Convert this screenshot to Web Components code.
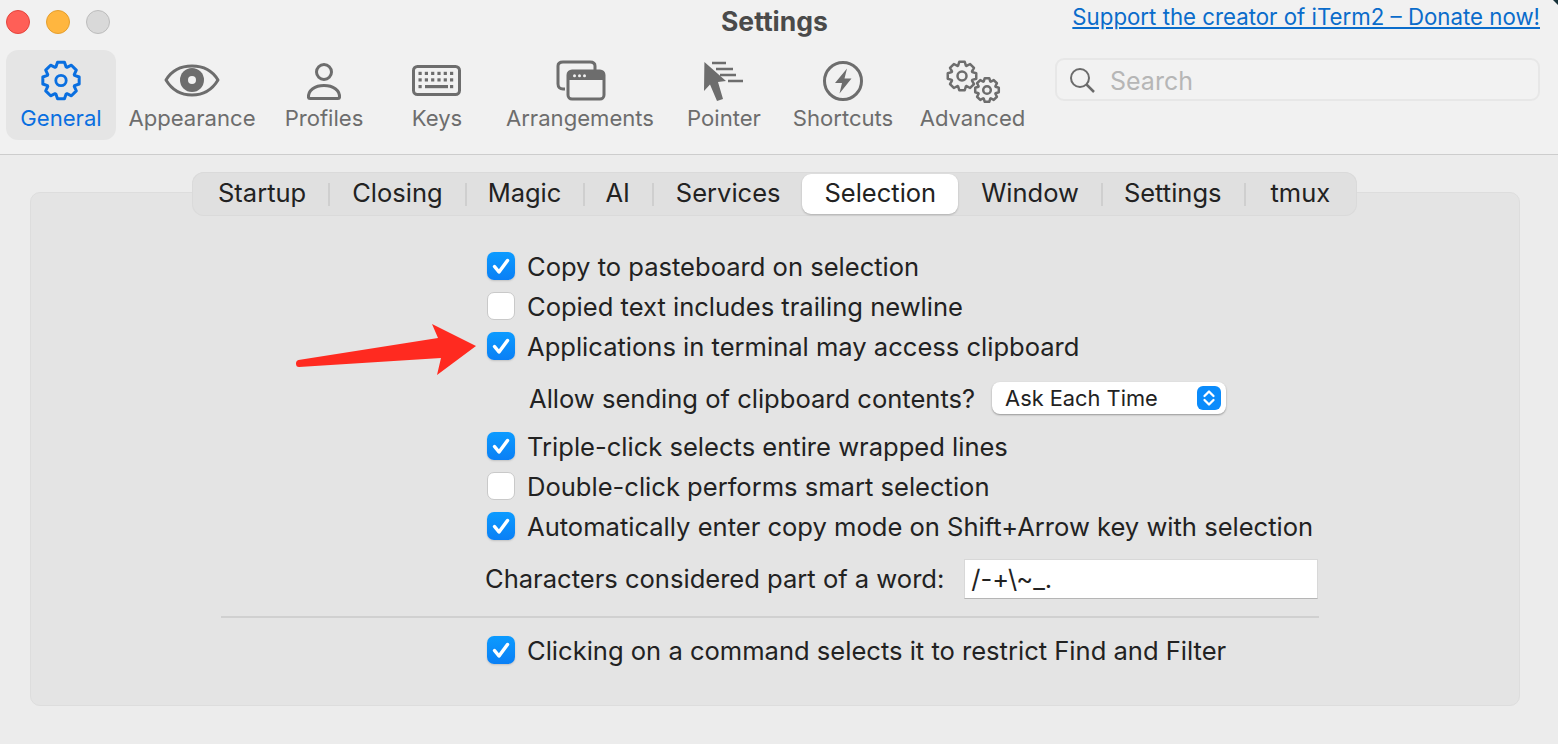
<!DOCTYPE html>
<html>
<head>
<meta charset="utf-8">
<title>Settings</title>
<style>
  html, body { margin: 0; height: 100%; overflow: hidden; }
  body { background: #ececec; font-family: Inter, "Liberation Sans", sans-serif; color: #222; }
</style>
</head>
<body>
<settings-window></settings-window>

<script>
// builds a gear outline as a polygon, the round stroke join softens the teeth
function gearPoints(cx, cy, rOut, rIn, teeth) {
  const pts = [];
  const step = Math.PI * 2 / teeth;
  for (let i = 0; i < teeth; i++) {
    const a = i * step - Math.PI / 2;
    [[-0.5, rIn], [-0.24, rOut], [0.24, rOut], [0.5, rIn]].forEach(([k, r]) => {
      const t = a + k * step * (r === rIn ? 0.92 : 1);
      pts.push((cx + Math.cos(t) * r).toFixed(2) + ',' + (cy + Math.sin(t) * r).toFixed(2));
    });
  }
  return pts.join(' ');
}

function keyboardDots() {
  let out = '';
  [19.8, 26.3].forEach(y => {
    for (let i = 0; i < 6; i++) out += `<rect x="${16.5 + i * 6.3}" y="${y}" width="3.2" height="3.2"/>`;
  });
  out += '<rect x="16.5" y="33" width="3.2" height="3.2"/><rect x="23" y="33" width="23" height="3.2"/><rect x="48" y="33" width="3.2" height="3.2"/>';
  return out;
}

const icons = {
  general: `<polygon points="${gearPoints(35, 28.5, 18.5, 14.5, 8)}" fill="none" stroke="currentColor" stroke-width="3" stroke-linejoin="round"/>
    <circle cx="35" cy="28.5" r="5.2" fill="none" stroke="currentColor" stroke-width="2.8"/>`,
  appearance: `<path d="M9 28C15 18 24 14 35 14S55 18 61 28C55 38 46 43 35 43S15 38 9 28Z" fill="none" stroke="currentColor" stroke-width="3" stroke-linejoin="round"/>
    <circle cx="35" cy="28" r="12"/><circle cx="35" cy="28" r="4" fill="#f1f1f1"/>`,
  profiles: `<circle cx="35" cy="20" r="7.5" fill="none" stroke="currentColor" stroke-width="3"/>
    <path d="M19.5 45.5C19 38 26 33.5 35 33.5S51 38 50.5 45.5C50.4 46.3 49.8 46.5 49 46.5H21C20.2 46.5 19.6 46.3 19.5 45.5Z" fill="none" stroke="currentColor" stroke-width="3" stroke-linejoin="round"/>`,
  keys: `<rect x="11.5" y="14.5" width="46" height="28" rx="4" fill="none" stroke="currentColor" stroke-width="3"/>${keyboardDots()}`,
  arrangements: `<path d="M20 37H18C15 37 13 35 13 32V14C13 11 15 10 18 10H45C48 10 50 11 50 14V18" fill="none" stroke="currentColor" stroke-width="3"/>
    <rect x="23" y="19" width="36" height="28" rx="4" fill="none" stroke="currentColor" stroke-width="3"/>
    <path d="M23 28V23C23 20.5 25 19 27 19H55C57 19 59 20.5 59 23V28Z"/>
    <g fill="#f1f1f1"><circle cx="29.5" cy="23.800" r="1.500"/><circle cx="34.5" cy="23.800" r="1.500"/><circle cx="39.5" cy="23.800" r="1.500"/></g>`,
  pointer: `<path d="M15.4 10L37 29L29 30L34 47L28 49L21 32.5L15 39Z"/>
    <g fill="none" stroke="currentColor" stroke-width="2.500"><path d="M23 11H37M27 17H44M31 23H47M39 29H54"/></g>`,
  shortcuts: `<circle cx="35" cy="29" r="18.500" fill="none" stroke="currentColor" stroke-width="3"/>
    <path d="M39 16.500L27 31H34L31.500 41.500L43.500 26.500H36.500Z"/>`,
  advanced: `<polygon points="${gearPoints(24, 24, 14.500, 11, 8)}" fill="none" stroke="currentColor" stroke-width="2.500" stroke-linejoin="round"/>
    <circle cx="24" cy="24" r="4.500" fill="none" stroke="currentColor" stroke-width="2.500"/>
    <polygon points="${gearPoints(49, 38, 12, 9.200, 8)}" fill="none" stroke="currentColor" stroke-width="2.500" stroke-linejoin="round"/>
    <circle cx="49" cy="38" r="3.800" fill="none" stroke="currentColor" stroke-width="2.500"/>`
};

class TrafficLights extends HTMLElement {
  constructor() {
    super();
    this.attachShadow({ mode: 'open' }).innerHTML = `
      <style>
        :host { display: flex; gap: 16px; padding-left: 6px; align-items: center; }
        i { display: block; width: 24px; height: 24px; border-radius: 50%; box-sizing: border-box; border: 1px solid; }
        .r { background: #ff5f57; border-color: #e5443c; }
        .y { background: #ffb63f; border-color: #e59f2e; }
        .g { background: #d9d9d9; border-color: #bdbdbd; }
      </style>
      <i class="r"></i><i class="y"></i><i class="g"></i>`;
  }
}

class TitleBar extends HTMLElement {
  constructor() {
    super();
    this.attachShadow({ mode: 'open' }).innerHTML = `
      <style>
        :host { display: grid; grid-template-columns: 721px auto 1fr; height: 50px; box-sizing: border-box; padding-right: 18px; }
        traffic-lights { height: 44px; }
        .title { font-size: 26.500px; font-weight: 700; color: #4a4a4a; line-height: 42px; }
        a { justify-self: end; font-size: 22.250px; line-height: 34px; color: #0a6ccb; text-decoration: underline; white-space: nowrap; }
      </style>
      <traffic-lights></traffic-lights>
      <div class="title">Settings</div>
      <a>Support the creator of iTerm2 – Donate now!</a>`;
  }
}

class ToolItem extends HTMLElement {
  constructor() {
    super();
    const active = this.hasAttribute('active');
    this.attachShadow({ mode: 'open' }).innerHTML = `
      <style>
        :host { display: flex; flex-direction: column; align-items: center; height: 90px; color: ${active ? '#0a6fe0' : '#6d6d6d'}; border-radius: 12px; background: ${active ? '#e5e5e5' : 'transparent'}; }
        svg { display: block; width: 70px; height: 54px; fill: currentColor; flex: none; }
        span { font-size: 22.100px; line-height: 28px; white-space: nowrap; }
      </style>
      <svg viewBox="0 -2 70 54">${icons[this.getAttribute('icon')]}</svg>
      <span><slot></slot></span>`;
  }
}

class SearchBox extends HTMLElement {
  constructor() {
    super();
    this.attachShadow({ mode: 'open' }).innerHTML = `
      <style>
        :host { display: flex; align-items: center; gap: 15px; box-sizing: border-box; width: 485px; height: 43px; margin: 8px 0 0 14px; padding-left: 12px; border: 2px solid #e7e7e7; border-radius: 9px; background: #f2f2f2; }
        svg { width: 26px; height: 26px; flex: none; }
        span { font-size: 25px; color: #b6b6b6; padding-top: 2px; }
      </style>
      <svg viewBox="0 0 26 26" fill="none" stroke="#6b6b6b"><circle cx="11" cy="11" r="9" stroke-width="2"/><path d="M17.500 17.500L25 25" stroke-width="2.500"/></svg>
      <span>Search</span>`;
  }
}

class PrefToolbar extends HTMLElement {
  constructor() {
    super();
    this.attachShadow({ mode: 'open' }).innerHTML = `
      <style>
        :host { display: grid; grid-template-columns: 110px 152px 112px 114px 172px 116px 122px 137px auto; height: 105px; padding-left: 6px; box-sizing: border-box; border-bottom: 1px solid #cdcdcd; align-items: start; }
      </style>
      <slot></slot>`;
  }
}

class TabStrip extends HTMLElement {
  constructor() {
    super();
    this.attachShadow({ mode: 'open' }).innerHTML = `
      <style>
        :host { display: inline-flex; align-items: center; box-sizing: border-box; height: 44px; padding: 0 5px 0 4px; border-radius: 12px; background: #e0e0e0; box-shadow: inset 0 0 0 1px #dadada; }
      </style>
      <slot></slot>`;
  }
}

class TabItem extends HTMLElement {
  constructor() {
    super();
    const sel = this.hasAttribute('selected');
    const sep = this.hasAttribute('sep');
    this.attachShadow({ mode: 'open' }).innerHTML = `
      <style>
        :host { display: flex; align-items: center; height: ${sel ? '40px' : '100%'}; box-sizing: border-box; font-size: 25.500px; color: #222; padding: 0 ${sel ? '22px' : '0'}; background: ${sel ? '#fff' : 'transparent'}; border-radius: ${sel ? '9px' : '0'}; box-shadow: ${sel ? '0 1px 2px rgba(0,0,0,.22)' : 'none'}; white-space: nowrap; }
        .t { padding: 0 ${sel ? '0' : '22px'} 3px; }
        .s { width: 2px; height: 23px; background: #cfcfcf; display: ${sep ? 'block' : 'none'}; }
      </style>
      <span class="t"><slot></slot></span><span class="s"></span>`;
  }
}

class CheckRow extends HTMLElement {
  constructor() {
    super();
    const on = this.hasAttribute('checked');
    this.attachShadow({ mode: 'open' }).innerHTML = `
      <style>
        :host { display: flex; align-items: center; gap: 12px; height: 40px; font-size: 25.550px; color: #222; white-space: nowrap; }
        .box { width: 28px; height: 28px; flex: none; box-sizing: border-box; border-radius: 7px; }
        .on { background: linear-gradient(#0c9bff, #0a7ff5); box-shadow: 0 1px 2px rgba(0,0,0,.15); }
        .off { background: #fff; border: 1px solid #c9c9c9; }
        svg { display: block; width: 28px; height: 28px; }
      </style>
      <span class="box ${on ? 'on' : 'off'}">${on ? '<svg viewBox="0 0 28 28"><path d="M7.500 14.500L12 20L20.500 8.500" fill="none" stroke="#fff" stroke-width="3.500" stroke-linecap="round" stroke-linejoin="round"/></svg>' : ''}</span>
      <span><slot></slot></span>`;
  }
}

class PopupButton extends HTMLElement {
  constructor() {
    super();
    this.attachShadow({ mode: 'open' }).innerHTML = `
      <style>
        :host { display: flex; align-items: center; justify-content: space-between; box-sizing: border-box; width: 234px; height: 32px; padding: 0 5px 0 13px; background: #fff; border-radius: 8px; box-shadow: 0 1px 2px rgba(0,0,0,.35); font-size: 21.800px; color: #222; white-space: nowrap; }
        svg { display: block; width: 24px; height: 24px; }
      </style>
      <span><slot></slot></span>
      <svg viewBox="0 0 24 24"><rect width="24" height="24" rx="6" fill="#0a8bfb"/><path d="M7.500 10L12 5.500L16.500 10M7.500 14L12 18.500L16.500 14" fill="none" stroke="#fff" stroke-width="2.300" stroke-linecap="round" stroke-linejoin="round"/></svg>`;
  }
}

class TextField extends HTMLElement {
  constructor() {
    super();
    this.attachShadow({ mode: 'open' }).innerHTML = `
      <style>
        :host { display: block; box-sizing: border-box; width: 354px; height: 40px; padding-left: 6px; background: #fff; border: 1px solid #d8d8d8; border-bottom: 1px solid #b5b5b5; font-size: 25.550px; line-height: 38px; color: #222; }
      </style>
      <slot></slot>`;
  }
}

class SelectionPane extends HTMLElement {
  constructor() {
    super();
    this.attachShadow({ mode: 'open' }).innerHTML = `
      <style>
        :host { display: block; position: relative; box-sizing: border-box; margin: 37px 38px 0 30px; height: 514px; background: #e4e4e4; border: 1px solid #dddddd; border-radius: 10px; font-size: 25.550px; color: #222; }
        .tabs { display: flex; padding-left: 161px; margin-top: -21px; }
        form { display: block; padding: 30px 0 0 456px; margin: 0; }
        .line { display: flex; align-items: center; white-space: nowrap; }
        .popup-line { height: 60px; padding: 4px 0 0 42px; box-sizing: border-box; gap: 17px; }
        .word-line { height: 64px; margin-left: -2px; padding-top: 2px; box-sizing: border-box; gap: 20px; }
        .word-line span { padding-bottom: 2px; }
        hr { height: 2px; border: 0; background: #d0d0d0; margin: 6px 200px 12px -266px; }
        .arrow { position: absolute; left: 264px; top: 130px; width: 183px; height: 54px; }
      </style>
      <div class="tabs"><slot name="tabs"></slot></div>
      <form>
        <check-row checked>Copy to pasteboard on selection</check-row>
        <check-row>Copied text includes trailing newline</check-row>
        <check-row checked>Applications in terminal may access clipboard</check-row>
        <div class="line popup-line"><span>Allow sending of clipboard contents?</span><popup-button>Ask Each Time</popup-button></div>
        <check-row checked>Triple-click selects entire wrapped lines</check-row>
        <check-row>Double-click performs smart selection</check-row>
        <check-row checked>Automatically enter copy mode on Shift+Arrow key with selection</check-row>
        <div class="line word-line"><span>Characters considered part of a word:</span><text-field>/-+\\~_.</text-field></div>
        <hr>
        <check-row checked>Clicking on a command selects it to restrict Find and Filter</check-row>
      </form>
      <svg class="arrow" viewBox="264 130 183 54"><path d="M267.500 167L407 145L401 131L445 153L406 182L410 165L268 174Q265 174 265 170.500Q265 167.500 267.500 167Z" fill="#ff2a20"/></svg>`;
  }
}

class SettingsWindow extends HTMLElement {
  constructor() {
    super();
    this.attachShadow({ mode: 'open' }).innerHTML = `
      <style>
        :host { display: block; position: relative; height: 744px; background: #ececec; }
        header { background: #f1f1f1; }
        .corner { position: absolute; top: 0; right: 0; width: 5px; height: 5px; background: #17323a; clip-path: polygon(0 0, 100% 0, 100% 100%); }
      </style>
      <header>
        <title-bar></title-bar>
        <pref-toolbar>
          <tool-item icon="general" active>General</tool-item>
          <tool-item icon="appearance">Appearance</tool-item>
          <tool-item icon="profiles">Profiles</tool-item>
          <tool-item icon="keys">Keys</tool-item>
          <tool-item icon="arrangements">Arrangements</tool-item>
          <tool-item icon="pointer">Pointer</tool-item>
          <tool-item icon="shortcuts">Shortcuts</tool-item>
          <tool-item icon="advanced">Advanced</tool-item>
          <search-box></search-box>
        </pref-toolbar>
      </header>
      <selection-pane>
        <tab-strip slot="tabs">
          <tab-item sep>Startup</tab-item>
          <tab-item sep>Closing</tab-item>
          <tab-item sep style="margin-left:-1px">Magic</tab-item>
          <tab-item sep style="margin-left:-2px">AI</tab-item>
          <tab-item>Services</tab-item>
          <tab-item selected>Selection</tab-item>
          <tab-item sep style="margin-left:1px">Window</tab-item>
          <tab-item sep style="margin-left:-1px">Settings</tab-item>
          <tab-item style="margin-left:3px">tmux</tab-item>
        </tab-strip>
      </selection-pane>
      <div class="corner"></div>`;
  }
}

customElements.define('traffic-lights', TrafficLights);
customElements.define('title-bar', TitleBar);
customElements.define('tool-item', ToolItem);
customElements.define('search-box', SearchBox);
customElements.define('pref-toolbar', PrefToolbar);
customElements.define('tab-strip', TabStrip);
customElements.define('tab-item', TabItem);
customElements.define('check-row', CheckRow);
customElements.define('popup-button', PopupButton);
customElements.define('text-field', TextField);
customElements.define('selection-pane', SelectionPane);
customElements.define('settings-window', SettingsWindow);
</script>
</body>
</html>
